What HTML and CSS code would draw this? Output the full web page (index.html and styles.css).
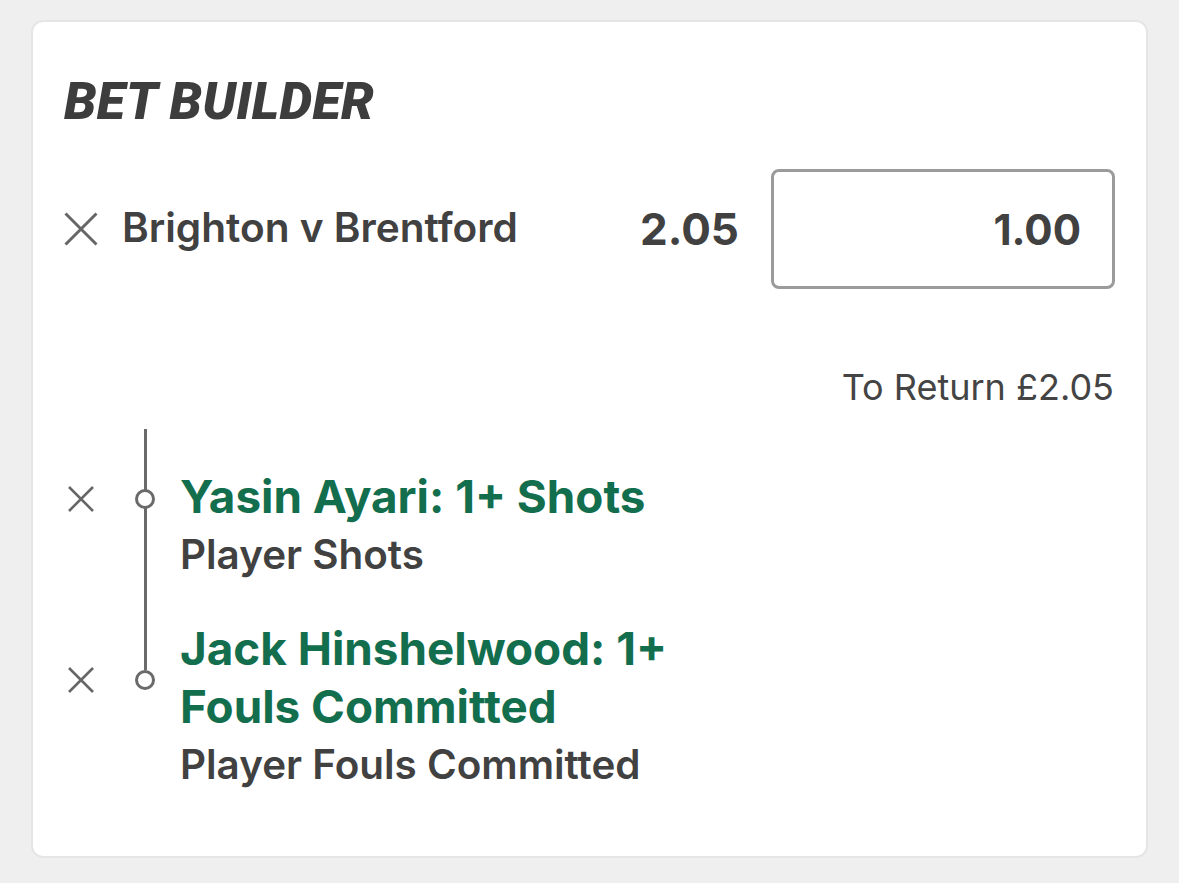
FILE: index.html
```html
<!DOCTYPE html>
<html lang="en">
<head>
<meta charset="utf-8">
<title>Bet Builder</title>
<link rel="stylesheet" href="styles.css">
</head>
<body>
<div class="page">
  <section class="card">
    <h1 class="title">BET BUILDER</h1>

    <div class="bet-row">
      <button class="remove remove-lg" aria-label="Remove">
        <svg viewBox="0 0 34 34" width="34" height="34"><path d="M1.5 1.5 L32.5 32.5 M32.5 1.5 L1.5 32.5" /></svg>
      </button>
      <div class="event">Brighton v Brentford</div>
      <div class="odds">2.05</div>
      <div class="stake">1.00</div>
    </div>

    <div class="return">To Return £2.05</div>

    <div class="legs">
      <div class="leg">
        <button class="remove remove-sm" aria-label="Remove">
          <svg viewBox="0 0 26 26" width="26" height="26"><path d="M1 1 L25 25 M25 1 L1 25" /></svg>
        </button>
        <span class="node"></span>
        <div class="leg-title">Yasin Ayari: 1+ Shots</div>
        <div class="leg-market">Player Shots</div>
      </div>
      <div class="leg">
        <button class="remove remove-sm" aria-label="Remove">
          <svg viewBox="0 0 26 26" width="26" height="26"><path d="M1 1 L25 25 M25 1 L1 25" /></svg>
        </button>
        <span class="node"></span>
        <div class="leg-title">Jack Hinshelwood: 1+<br>Fouls Committed</div>
        <div class="leg-market">Player Fouls Committed</div>
      </div>
    </div>
  </section>
</div>
</body>
</html>
```

FILE: styles.css
```css
* { box-sizing: border-box; }

html, body {
  margin: 0;
  padding: 0;
  background: #efefef;
}

body {
  font-family: Inter, "Noto Sans", "Liberation Sans", sans-serif;
  color: #414141;
}

.page {
  padding: 20px 0 0 31px;
}

.card {
  width: 1117px;
  height: 838px;
  background: #ffffff;
  border: 2px solid #e5e5e5;
  border-radius: 12px;
  padding: 50px 31px 0 31px;
}

.title {
  margin: 0;
  font-family: Roboto, "Liberation Sans", sans-serif;
  font-weight: 900;
  font-style: italic;
  font-size: 52px;
  line-height: 60px;
  letter-spacing: 0.3px;
  color: #3d3d3d;
}

.bet-row {
  margin-top: 37px;
  display: flex;
  align-items: center;
  height: 120px;
}

.remove {
  display: flex;
  align-items: center;
  justify-content: center;
  padding: 0;
  margin: 0;
  border: 0;
  background: none;
  cursor: pointer;
}

.remove svg path {
  fill: none;
  stroke: #666666;
}

.remove-lg {
  width: 34px;
  height: 34px;
}

.remove-lg svg path { stroke-width: 3; }

.event {
  flex: 1;
  margin-left: 24px;
  margin-top: -4px;
  font-size: 40.6px;
  font-weight: 600;
  color: #414141;
}

.odds {
  font-size: 44px;
  font-weight: 700;
  color: #414141;
  margin-right: 32px;
}

.stake {
  width: 344px;
  height: 120px;
  border: 3px solid #9b9b9b;
  border-radius: 8px;
  display: flex;
  align-items: center;
  justify-content: flex-end;
  padding-right: 31px;
  font-size: 42px;
  font-weight: 700;
  color: #414141;
}

.return {
  margin-top: 76px;
  text-align: right;
  padding-right: 1px;
  font-size: 36px;
  line-height: 44px;
  font-weight: 400;
  color: #444444;
}

.legs {
  position: relative;
  margin-top: 20px;
  padding-top: 39px;
  display: flex;
  flex-direction: column;
  gap: 36px;
}

.legs::before {
  content: "";
  position: absolute;
  left: 80px;
  top: 0;
  bottom: 124px;
  width: 3px;
  background: #6a6a6a;
}

.leg {
  display: grid;
  grid-template-columns: 34px 82px 1fr;
  grid-template-rows: auto auto;
  align-items: center;
}

.remove-sm {
  grid-column: 1;
  grid-row: 1;
  width: 34px;
  height: 26px;
  margin-top: 4px;
}

.remove-sm svg path { stroke-width: 2.6; }

.node {
  grid-column: 2;
  grid-row: 1;
  position: relative;
  z-index: 1;
  width: 20px;
  height: 20px;
  margin-left: 37px;
  margin-top: 4px;
  border: 3px solid #6a6a6a;
  border-radius: 50%;
  background: #ffffff;
}

.leg-title {
  grid-column: 3;
  grid-row: 1;
  font-size: 45.8px;
  line-height: 58px;
  font-weight: 700;
  color: #136e4e;
}

.leg-market {
  grid-column: 3;
  grid-row: 2;
  font-size: 40.4px;
  line-height: 58px;
  font-weight: 600;
  color: #414141;
}
```
